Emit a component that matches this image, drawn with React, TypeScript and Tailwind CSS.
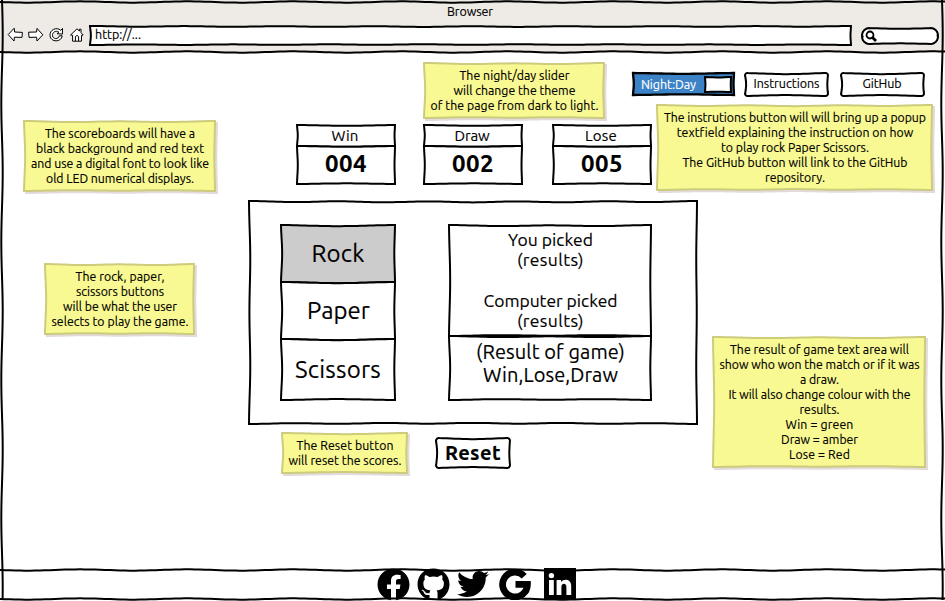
import { useLayoutEffect, useRef, type ReactNode } from "react";
import { FaFacebook, FaGithub, FaTwitter } from "react-icons/fa";

/** One line of text whose tracking is set so that it spans `w` pixels. */
function Line({ w, children }: { w: number; children: string }) {
  const ref = useRef<HTMLSpanElement>(null);
  useLayoutEffect(() => {
    const el = ref.current;
    if (!el) return;
    el.style.letterSpacing = "0px";
    const natural = el.getBoundingClientRect().width;
    el.style.letterSpacing = `${(w + 1 - natural) / children.length}px`;
  }, [w, children]);
  return (
    <span ref={ref} className="inline-block whitespace-pre">
      {children}
    </span>
  );
}

/** Wave offset at distance t along an edge of length len. */
function wave(t: number, len: number, amp: number) {
  const n = Math.max(1, Math.round(len / 90));
  const k = Math.sin((Math.PI * t) / len);
  return amp * (0.4 - 0.4 * Math.cos((2 * Math.PI * n * t) / len)) + 0.35 * amp * k;
}

/** Closed hand-drawn rectangle. */
function sketchPath(w: number, h: number, amp: number, r: number, follow: boolean) {
  const pts: string[] = [];
  const add = (x: number, y: number) => pts.push(`${x.toFixed(2)} ${y.toFixed(2)}`);
  const corner = (cx: number, cy: number, from: number) => {
    if (!r) return;
    for (let a = 0; a <= 90; a += 15) {
      const q = ((from + a) * Math.PI) / 180;
      add(cx + r * Math.cos(q), cy + r * Math.sin(q));
    }
  };
  const step = 4;
  for (let t = r; t < w - r; t += step) add(t, wave(t, w, amp));
  if (!r) add(w, 0);
  corner(w - r, r, -90);
  for (let t = r; t < h - r; t += step) add(w - wave(t, h, amp) * 0.6, t);
  if (!r) add(w, h);
  corner(w - r, h - r, 0);
  for (let t = r; t < w - r; t += step) add(w - t, follow ? h + wave(t, w, amp) : h - wave(t, w, amp) * 0.8);
  if (!r) add(0, h);
  corner(r, h - r, 90);
  for (let t = r; t < h - r; t += step) add(wave(t, h, amp), h - t);
  if (!r) add(0, 0);
  corner(r, r, 180);
  return `M${pts.join("L")}Z`;
}

interface BoxProps {
  w: number;
  h: number;
  fill?: string;
  stroke?: string;
  thick?: number;
  amp?: number;
  r?: number;
  shadow?: boolean;
  /** The bottom edge takes the curve of the top edge of the box below. */
  follow?: boolean;
  className?: string;
  children?: ReactNode;
}

function Box({ w, h, fill = "#fff", stroke = "#000", thick = 2, amp = 1, r = 0, shadow, follow = false, className = "", children }: BoxProps) {
  const d = sketchPath(w, h, amp, r, follow);
  return (
    <div className={`relative shrink-0 ${className}`} style={{ width: w, height: h }}>
      <svg className="absolute inset-0 overflow-visible" width={w} height={h}>
        {shadow && <path d={d} fill="#e3dadc" stroke="#e3dadc" strokeWidth={2} transform="translate(2 2)" />}
        <path d={d} fill={fill} stroke={stroke} strokeWidth={thick} strokeLinejoin={r ? "round" : "miter"} />
      </svg>
      <div className="relative flex h-full w-full flex-col items-center justify-center">{children}</div>
    </div>
  );
}

function Note({ w, h, lines, className = "" }: { w: number; h: number; lines: [string, number][]; className?: string }) {
  return (
    <Box w={w} h={h} fill="#f9f993" stroke="#cccc7c" shadow className={className}>
      <div className="flex flex-col items-center pl-px text-[12.25px] leading-[15px]">
        {lines.map(([t, lw]) => (
          <Line key={t} w={lw}>{t}</Line>
        ))}
      </div>
    </Box>
  );
}

function Score({ label, lw, value, w }: { label: string; lw: number; value: string; w: number }) {
  return (
    <div className="flex flex-col">
      <Box w={w} h={21} amp={0.7} follow>
        <div className="-ml-[2px] text-[15px] leading-5"><Line w={lw}>{label}</Line></div>
      </Box>
      <Box w={w} h={38} amp={0.7}>
        <div className="-mt-[2px] text-[24px] leading-7 font-bold"><Line w={41}>{value}</Line></div>
      </Box>
    </div>
  );
}

function NavIcons() {
  return (
    <svg width="80" height="20" fill="#fff" stroke="#000" strokeWidth="1" strokeLinejoin="round" className="-mt-[2px] ml-[6px] shrink-0">
      <path d="M2.2 9.6 8.2 3.2 8.6 7 16.4 7.4 16 12.4 8.4 12.2 8 16Z" />
      <path d="M36.8 9.8 31 3.4 30.6 7 22.6 7.2 23 12.4 30.6 12.2 31 16Z" />
      <path d="M54.8 5.3 56.5 3.5 56.4 9.1 51 8.7 52.9 7.1C49.6 4.9 46 7.5 46.5 10.8C47 14.3 52.4 14.8 53.3 10.8L56.2 10.8C55.5 17.5 44.7 17.6 44 10.8C43.5 4.7 50.4 1.6 54.8 5.3Z" />
      <path d="M64.6 10 71 3.8 73.4 6V4.2H75V7.6L77.2 10 75.6 10.2 75.4 16.2H66.6V10.2Z" />
      <path fill="none" d="M69.4 16.2V11.6Q71 9.2 72.6 11.6V16.2" />
    </svg>
  );
}

function Horizontal({ className = "" }: { className?: string }) {
  let d = "M0 2";
  for (let x = 5; x <= 945; x += 5) d += `L${x} ${(2 + 0.65 * Math.sin(x / 17)).toFixed(2)}`;
  return (
    <svg width="945" height="4" className={`absolute left-0 ${className}`}>
      <path d={d} fill="none" stroke="#000" strokeWidth="2" />
    </svg>
  );
}

function Vertical({ className = "" }: { className?: string }) {
  let d = "M2 0";
  for (let y = 5; y <= 601; y += 5) d += `L${(2 + 0.7 * Math.sin(y / 22)).toFixed(2)} ${y}`;
  return (
    <svg width="4" height="601" className={`absolute top-0 ${className}`}>
      <path d={d} fill="none" stroke="#000" strokeWidth="2" />
    </svg>
  );
}

function GoogleIcon() {
  return (
    <svg width="32" height="32" fill="none" stroke="#000" strokeWidth="6.8" className="ml-[10px] shrink-0">
      <path d="M25.2 8.2A12.4 12.4 0 1 0 28.4 16.4H16.5" />
    </svg>
  );
}

function LinkedinIcon() {
  return (
    <svg width="32" height="32" className="ml-[13px] shrink-0">
      <rect width="32" height="32" />
      <circle cx="7.4" cy="7.6" r="2.7" fill="#fff" />
      <path fill="#fff" d="M5 12H9.8V27H5ZM12.6 12H17.1V14C20 10.4 27.2 11 27.2 18V27H22.4V19C22.4 14.6 17.4 14.8 17.4 19V27H12.6Z" />
    </svg>
  );
}

export default function App() {
  return (
    <div className="relative flex h-[601px] w-[945px] flex-col overflow-hidden bg-white text-black [-webkit-text-stroke:0.15px] [font-family:Ubuntu,'Noto_Sans','Open_Sans',sans-serif]">
      <header className="h-[52px] shrink-0 bg-[#eeebe7]">
        <div className="flex h-[25px] justify-center pt-1 pr-[5px] text-[12.5px] leading-[15px]">
          <Line w={45}>Browser</Line>
        </div>
        <div className="flex h-[21px] items-center">
          <NavIcons />
          <Box w={761} h={19} amp={0.8} className="ml-[4px]">
            <div className="-mt-[2px] w-full pl-[5px] text-[12.5px] leading-[15px]"><Line w={45}>http://...</Line></div>
          </Box>
          <Box w={76} h={16} r={7.5} amp={0.7} className="ml-[11px]">
            <div className="flex w-full pl-[3px]">
              <svg width="12" height="12" fill="none" stroke="#000">
                <circle cx="5" cy="5" r="3.5" strokeWidth="1.8" />
                <path d="m7 7 4 4" strokeWidth="2.8" />
              </svg>
            </div>
          </Box>
        </div>
      </header>

      <main className="flex h-[518px] shrink-0 flex-col">
        <div className="flex h-[149px] shrink-0">
          <div className="w-[248px] shrink-0 pt-[69px] pl-[24px]">
            <Note w={191} h={70} lines={[["The scoreboards will have a", 149], ["black background and red text", 167], ["and use a digital font to look like", 177], ["old LED numerical displays.", 147]]} />
          </div>
          <div className="w-[409px] shrink-0">
            <Note w={180} h={55} className="mt-[11px] ml-[176px]" lines={[["The night/day slider", 109], ["will change the theme", 121], ["of the page from dark to light.", 167]]} />
            <div className="mt-[7px] flex pl-[49px]">
              <Score label="Win" lw={26} value="004" w={98} />
              <div className="ml-[29px]"><Score label="Draw" lw={34} value="002" w={98} /></div>
              <div className="ml-[31px]"><Score label="Lose" lw={31} value="005" w={98} /></div>
            </div>
          </div>
          <div className="min-w-0 flex-1">
            <div className="-ml-6 flex h-[53px] items-start pt-[21px]">
              <Box w={101} h={22} fill="#3b82c6" amp={0.7} thick={2.3}>
                <div className="flex w-full items-center justify-between pr-[3px] pl-[8px] text-[12.5px] leading-[15px] text-white">
                  <Line w={54}>Night:Day</Line>
                  <Box w={26} h={15} amp={0.4} />
                </div>
              </Box>
              <Box w={83} h={23} r={2.5} className="ml-[11px]">
                <div className="-mt-[2px] text-[12.5px] leading-[15px]"><Line w={65}>Instructions</Line></div>
              </Box>
              <Box w={83} h={23} r={2.5} className="ml-[13px]">
                <div className="-mt-[2px] pr-px text-[12.5px] leading-[15px]"><Line w={38}>GitHub</Line></div>
              </Box>
            </div>
            <Note w={275} h={85} lines={[["The instrutions button will will bring up a popup", 261], ["textfield explaining the instruction on how", 235], ["to play rock Paper Scissors.", 147], ["The GitHub button will link to the GitHub", 224], ["repository.", 59]]} />
          </div>
        </div>

        <div className="flex">
          <div className="w-[249px] shrink-0 pt-[63px] pl-[45px]">
            <Note w={149} h={70} lines={[["The rock, paper,", 88], ["scissors buttons", 87], ["will be what the user", 113], ["selects to play the game.", 136]]} />
          </div>
          <div className="w-[448px] shrink-0">
            <Box w={448} h={223} amp={1.2}>
              <div className="flex h-full w-full items-start pt-[24px] pl-[32px]">
                <div className="flex flex-col text-[24px] leading-7">
                  <Box w={114} h={57} fill="#ccc" follow><Line w={52}>Rock</Line></Box>
                  <Box w={114} h={57} follow><div className="pl-px"><Line w={62}>Paper</Line></div></Box>
                  <Box w={114} h={61}><Line w={85}>Scissors</Line></Box>
                </div>
                <div className="ml-[54px] flex flex-col">
                  <Box w={202} h={111}>
                    <div className="flex flex-col items-center pl-px text-[17.5px] leading-[20.5px]">
                      <Line w={84}>You picked</Line>
                      <Line w={66}>(results)</Line>
                      <div className="h-[20px]" />
                      <Line w={133}>Computer picked</Line>
                      <Line w={66}>(results)</Line>
                    </div>
                  </Box>
                  <Box w={202} h={64}>
                    <div className="-mt-[11px] flex flex-col items-center pl-px text-[20px] leading-[23px]">
                      <Line w={148}>(Result of game)</Line>
                      <Line w={134}>Win,Lose,Draw</Line>
                    </div>
                  </Box>
                </div>
              </div>
            </Box>
            <div className="flex pt-[9px] pl-[33px]">
              <Note w={125} h={40} lines={[["The Reset button", 96], ["will reset the scores.", 112]]} />
              <Box w={74} h={30} r={3} className="mt-[5px] ml-[29px]">
                <div className="text-[20px] leading-6 font-bold"><Line w={55}>Reset</Line></div>
              </Box>
            </div>
          </div>
          <div className="pt-[136px] pl-[16px]">
            <Note w={212} h={130} lines={[["The result of game text area will", 178], ["show who won the match or if it was", 199], ["a draw.", 38], ["It will also change colour with the", 181], ["results.", 39], ["Win = green", 67], ["Draw = amber", 76], ["Lose = Red", 60]]} />
          </div>
        </div>
      </main>

      <footer className="flex h-[31px] shrink-0 items-center pb-[3px] pl-[377px]">
        <FaFacebook size={33} className="shrink-0" />
        <FaGithub size={33} className="ml-[7px] shrink-0" />
        <FaTwitter size={32} className="ml-[7px] shrink-0" />
        <GoogleIcon />
        <LinkedinIcon />
      </footer>

      <Horizontal className="top-0" />
      <Horizontal className="top-[50px]" />
      <Horizontal className="top-[568px]" />
      <Horizontal className="top-[597px]" />
      <Vertical className="left-0" />
      <Vertical className="left-[940px]" />
    </div>
  );
}
